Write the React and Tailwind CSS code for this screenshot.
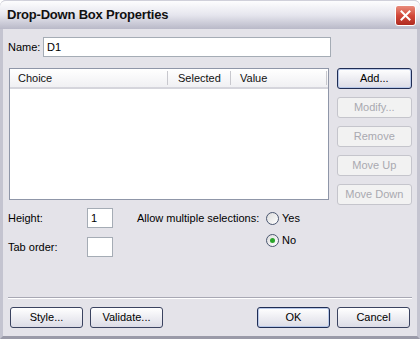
const font = { fontFamily: "'Liberation Sans', Arial, sans-serif" };

function Btn({ children, disabled, primary, className = "" }) {
  return (
    <button
      className={
        "h-[21px] rounded-[3px] border text-[11px] leading-none " +
        (disabled
          ? "border-[#c5c5cc] bg-[#f2f2f2] text-[#a9a9b0] "
          : primary
          ? "border-[#1f2d55] bg-gradient-to-b from-white to-[#dcdce6] text-black shadow-[inset_0_0_0_1px_#b8c8e8] "
          : "border-[#3b4360] bg-gradient-to-b from-white to-[#dcdce6] text-black ") +
        className
      }
    >
      {children}
    </button>
  );
}

function Radio({ checked, label }) {
  return (
    <div className="flex h-[20px] items-center gap-[3px]">
      <span className="flex h-[13px] w-[13px] items-center justify-center rounded-full border border-[#4a5670] bg-gradient-to-br from-[#dcdcdc] to-white">
        {checked && <span className="h-[5px] w-[5px] rounded-full bg-[#2aa52a]" />}
      </span>
      <span>{label}</span>
    </div>
  );
}

export default function App() {
  return (
    <div className="h-[339px] w-[420px] text-[11px] text-black" style={font}>
      <div className="flex h-full flex-col rounded-t-[6px] border-x-[3px] border-b-[3px] border-x-[#c4c4d0] border-b-[#9a9aa8] bg-[#e4e3e9]">
        <div className="-mx-[3px] flex h-[29px] items-center justify-between rounded-t-[6px] border-t border-[#d0d0da] bg-gradient-to-b from-[#fdfdfe] via-[#e6e6ee] to-[#b9b9c8] pl-[7px] pr-[4px]">
          <span className="text-[13px] font-bold tracking-[-0.2px] text-[#111]">Drop-Down Box Properties</span>
          <span className="flex h-[21px] w-[21px] items-center justify-center rounded-[3px] border border-white bg-gradient-to-b from-[#e88b7c] via-[#d2483a] to-[#b02b20]">
            <svg width="11" height="11" viewBox="0 0 11 11">
              <path d="M1.5 1.5 L9.5 9.5 M9.5 1.5 L1.5 9.5" stroke="white" strokeWidth="2" strokeLinecap="square" />
            </svg>
          </span>
        </div>

        <div className="flex flex-1 flex-col px-[5px] pt-[8px]">
          <div className="flex h-[20px] items-center">
            <span className="w-[35px]">Name:</span>
            <div className="flex h-[20px] w-[288px] items-center border border-[#a5acb5] bg-white pl-[3px]">D1</div>
          </div>

          <div className="mt-[11px] flex">
            <div className="ml-[1px] flex h-[132px] w-[322px] flex-col border border-[#8f96a8] bg-white">
              <div className="flex h-[20px] border-b-[2px] border-[#d5d5dc] bg-gradient-to-b from-white to-[#f0f0f3] text-[#111]">
                <div className="flex w-[158px] items-center pl-[8px]">
                  <span className="flex-1">Choice</span>
                  <span className="h-[14px] w-px bg-[#c8c8ce]" />
                </div>
                <div className="flex w-[63px] items-center pl-[10px]">
                  <span className="flex-1">Selected</span>
                  <span className="h-[14px] w-px bg-[#c8c8ce]" />
                </div>
                <div className="flex w-[96px] items-center pl-[9px]">
                  <span className="flex-1">Value</span>
                  <span className="h-[14px] w-px bg-[#c8c8ce]" />
                </div>
              </div>
            </div>
            <div className="ml-[8px] flex w-[76px] flex-col gap-[8px]">
              <Btn primary>Add...</Btn>
              <Btn disabled>Modify...</Btn>
              <Btn disabled>Remove</Btn>
              <Btn disabled>Move Up</Btn>
              <Btn disabled>Move Down</Btn>
            </div>
          </div>

          <div className="mt-[3px] flex">
            <div className="flex flex-col gap-[9px]">
              <div className="flex h-[20px] items-center">
                <span className="w-[79px]">Height:</span>
                <div className="flex h-[20px] w-[26px] items-center border border-[#a5acb5] bg-white pl-[3px]">1</div>
              </div>
              <div className="flex h-[20px] items-center">
                <span className="w-[79px]">Tab order:</span>
                <div className="h-[20px] w-[26px] border border-[#a5acb5] bg-white" />
              </div>
            </div>
            <div className="ml-[24px] flex">
              <span className="flex h-[20px] w-[129px] items-center">Allow multiple selections:</span>
              <div className="flex flex-col gap-[2px]">
                <Radio label="Yes" />
                <Radio checked label="No" />
              </div>
            </div>
          </div>

          <div className="mt-auto border-t border-b border-t-[#a8a8b4] border-b-white" />

          <div className="flex items-center pb-[8px] pt-[8px]">
            <Btn className="ml-[2px] w-[73px]">Style...</Btn>
            <Btn className="ml-[7px] w-[73px]">Validate...</Btn>
            <Btn primary className="ml-auto w-[73px]">OK</Btn>
            <Btn className="ml-[7px] mr-[2px] w-[73px]">Cancel</Btn>
          </div>
        </div>
      </div>
    </div>
  );
}
